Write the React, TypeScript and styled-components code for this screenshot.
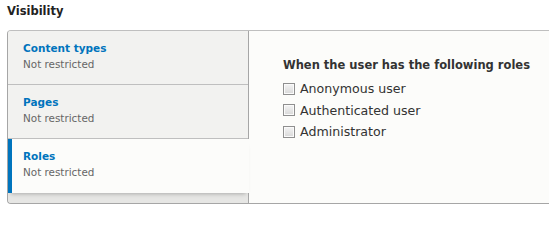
import React, { useState } from 'react'
import styled, { createGlobalStyle } from 'styled-components'

const GlobalStyle = createGlobalStyle`
    body {
        margin: 0;
        background: #fff;
        font-family: "DejaVu Sans", Verdana, sans-serif;
        color: #333;
        overflow: hidden;
    }
`

const Page = styled.div`
    box-sizing: border-box;
    width: 549px;
    padding: 3px 0 0 7px;
`

const Title = styled.h2`
    font-size: 11.5px;
    font-weight: bold;
    color: #222;
    margin: 0;
    line-height: 16px;
`

const Tabs = styled.div`
    display: flex;
    margin-top: 11px;
    height: 172px;
    border: 1px solid #a6a6a6;
    border-right: none;
    border-top-color: #bfbfbf;
    border-radius: 4px 0 0 4px;
    background: #e6e6e4;
    overflow: hidden;
`

const Menu = styled.ul`
    width: 240px;
    flex-shrink: 0;
    margin: 0;
    padding: 0;
    list-style: none;
    border-right: 1px solid #a6a6a6;
    background: #e6e6e4;
`

const MenuItem = styled.li<{ $selected?: boolean }>`
    height: 54px;
    box-sizing: border-box;
    padding: 9px 0 0 ${p => (p.$selected ? 11 : 15)}px;
    background: ${p => (p.$selected ? '#fcfcfa' : '#f2f2f0')};
    border-bottom: ${p => (p.$selected ? 'none' : '1px solid #bfbfbf')};
    border-left: ${p => (p.$selected ? '4px solid #0074bd' : 'none')};
    box-shadow: ${p => (p.$selected ? '0 4px 4px -3px rgba(0,0,0,0.25)' : 'none')};
    margin-right: ${p => (p.$selected ? '-1px' : '0')};
    position: relative;
    cursor: pointer;
`

const TabName = styled.div`
    font-size: 10.5px;
    font-weight: bold;
    color: #0074bd;
    line-height: 16px;
`

const Summary = styled.div`
    font-size: 10.4px;
    color: #666;
    line-height: 16px;
`

const Pane = styled.div`
    flex: 1;
    background: #fcfcfa;
    padding: 26px 0 0 34px;
`

const Legend = styled.div`
    font-size: 11.5px;
    font-weight: bold;
    color: #333;
    line-height: 16px;
    margin-bottom: 5px;
`

const Option = styled.label`
    display: flex;
    align-items: center;
    gap: 5px;
    height: 21.5px;
    font-size: 12.6px;
    color: #333;
`

const Box = styled.input`
    width: 12px;
    height: 12px;
    margin: 0;
    appearance: none;
    border: 1px solid #8f8f8f;
    background: linear-gradient(#f4f4f4, #d8d8d8);
    box-shadow: inset 0 0 0 1px #fafafa;
`

const tabs = [
    { name: 'Content types', summary: 'Not restricted' },
    { name: 'Pages', summary: 'Not restricted' },
    { name: 'Roles', summary: 'Not restricted' },
]

const roles = ['Anonymous user', 'Authenticated user', 'Administrator']

export default function App() {
    const [selected, setSelected] = useState(2)
    return (
        <Page>
            <GlobalStyle />
            <Title>Visibility</Title>
            <Tabs>
                <Menu>
                    {tabs.map((t, i) => (
                        <MenuItem key={t.name} $selected={i === selected} onClick={() => setSelected(i)}>
                            <TabName>{t.name}</TabName>
                            <Summary>{t.summary}</Summary>
                        </MenuItem>
                    ))}
                </Menu>
                <Pane>
                    <Legend>When the user has the following roles</Legend>
                    {roles.map(r => (
                        <Option key={r}>
                            <Box type="checkbox" />
                            {r}
                        </Option>
                    ))}
                </Pane>
            </Tabs>
        </Page>
    )
}
